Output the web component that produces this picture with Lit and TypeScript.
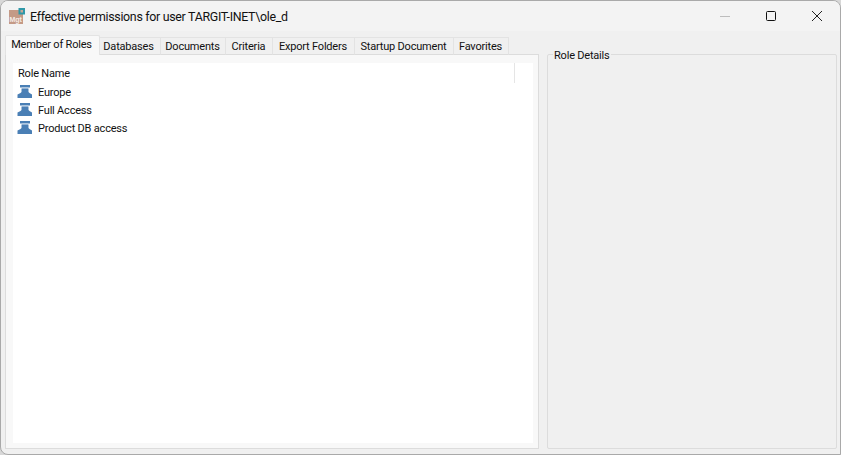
import { LitElement, html, css } from "lit";
import { customElement } from "lit/decorators.js";

const TABS: [string, number][] = [["Databases", 61], ["Documents", 65], ["Criteria", 47], ["Export Folders", 82], ["Startup Document", 99], ["Favorites", 55]];
const ROLES = ["Europe", "Full Access", "Product DB access"];

@customElement("app-root")
export class AppRoot extends LitElement {
  static styles = css`
    :host { display: block; width: 841px; height: 455px; background: #d8d8d8; font-family: Roboto, "Noto Sans", sans-serif; color: #111; }
    .win { box-sizing: border-box; width: 841px; height: 455px; display: flex; flex-direction: column; background: #f0f0f0; border: 1px solid #a9a9a9; border-radius: 8px 8px 0 8px; overflow: hidden; }
    .title { height: 30px; flex: none; display: flex; align-items: center; background: #f3f3f3; padding-left: 8px; }
    .logo { width: 16px; height: 16px; flex: none; margin-right: 5px; display: block; }
    .ttext { font-size: 12.4px; letter-spacing: -0.3px; flex: 1; white-space: nowrap; color: #111; }
    .wb { width: 46px; height: 30px; display: flex; align-items: center; justify-content: center; flex: none; }
    .content { flex: 1; display: flex; gap: 8px; padding: 23px 3px 5px 4px; min-height: 0; font-size: 11px; letter-spacing: -0.2px; }
    .left { width: 534px; flex: none; position: relative; display: flex; flex-direction: column; }
    .tabs { position: absolute; left: 0; top: -19px; display: flex; align-items: flex-end; height: 20px; z-index: 1; }
    .tab { box-sizing: border-box; height: 18px; line-height: 18px; padding-right: 1px; text-align: center; border: 1px solid #e3e3e3; border-left: 0; border-bottom: 1px solid #dcdcdc; background: #f0f0f0; white-space: nowrap; color: #111; }
    .tab:nth-child(2) { padding-right: 3px; }
    .tab.sel { height: 20px; line-height: 17px; padding-right: 2px; background: #f8f8f8; border: 1px solid #e3e3e3; border-bottom: 0; border-radius: 2px 2px 0 0; }
    .pane { box-sizing: border-box; flex: 1; border: 1px solid #dcdcdc; background: #f8f8f8; padding: 8px 5px 5px 7px; display: flex; }
    .list { flex: 1; background: #fff; display: flex; flex-direction: column; }
    .head { height: 20px; flex: none; display: flex; align-items: center; padding-left: 5px; }
    .head span { width: 497px; flex: none; height: 20px; line-height: 22px; box-sizing: border-box; border-right: 1px solid #e5e5e5; }
    .row { height: 18px; flex: none; display: flex; align-items: center; padding-left: 4px; gap: 5px; }
    .row svg { width: 16px; height: 16px; display: block; flex: none; }
    .group { flex: 1; position: relative; border: 1px solid #dcdcdc; border-radius: 2px; }
    .group .label { position: absolute; left: 5px; top: -6px; background: #f0f0f0; padding: 0 1px; line-height: 14px; color: #111; }
  `;

  render() {
    return html`<div class="win">
      <div class="title">
        <svg class="logo" viewBox="0 0 16 16">
          <rect x="0" y="2" width="14" height="14" fill="#c49a86"/>
          <rect x="9.500" y="0" width="6.500" height="6.500" fill="#2f98a8"/>
          <rect x="11.500" y="2" width="2.500" height="2.500" fill="#c8a898"/>
          <text x="0.500" y="13.500" font-size="7" font-weight="700" fill="#f4ece8" font-family="Liberation Sans">Mgt</text>
        </svg>
        <div class="ttext">Effective permissions for user TARGIT-INET\\ole_d</div>
        <div class="wb"><svg width="12" height="12" viewBox="0 0 12 12"><path d="M1 6.500h10" stroke="#bdbdbd" fill="none"/></svg></div>
        <div class="wb"><svg width="12" height="12" viewBox="0 0 12 12"><rect x="1.500" y="1.500" width="9" height="9" rx="1" stroke="#111" fill="none"/></svg></div>
        <div class="wb"><svg width="12" height="12" viewBox="0 0 12 12"><path d="M1 1l10 10M11 1L1 11" stroke="#222" fill="none"/></svg></div>
      </div>
      <div class="content">
        <div class="left">
          <div class="tabs">
            <div class="tab sel" style="width:95px">Member of Roles</div>
            ${TABS.map(([t, w]) => html`<div class="tab" style="width:${w}px">${t}</div>`)}
          </div>
          <div class="pane">
            <div class="list">
              <div class="head"><span>Role Name</span></div>
              ${ROLES.map((r) => html`<div class="row">
                <svg viewBox="0 0 16 16">
                  <path d="M3 1h10v2.500H3z" fill="#4a7fb5"/>
                  <path d="M5 3.500h6V4.500H5z" fill="#b9cfe3"/>
                  <path d="M4.500 4.500h7V8l1 1 2.500 1.500V14H.500v-3.500L3.500 9l1-1z" fill="#4a7fb5"/>
                </svg>
                <span>${r}</span>
              </div>`)}
            </div>
          </div>
        </div>
        <div class="group"><div class="label">Role Details</div></div>
      </div>
    </div>`;
  }
}
